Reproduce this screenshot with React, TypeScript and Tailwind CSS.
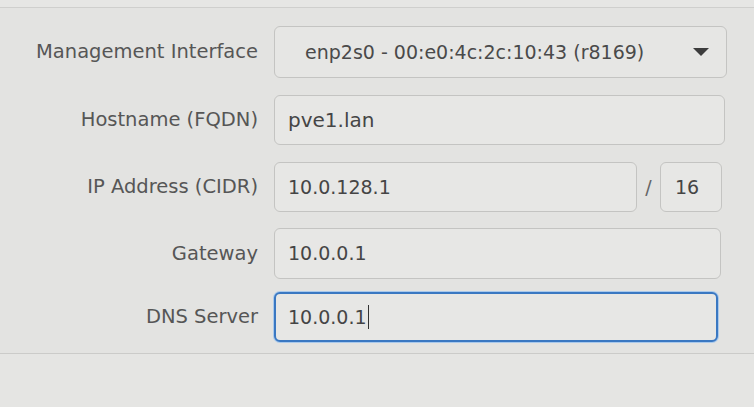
import type { ReactNode } from 'react'

const font = { fontFamily: '"DejaVu Sans", "Noto Sans", sans-serif' }

function Row({ label, className, children }: { label: string; className?: string; children: ReactNode }) {
  return (
    <div className={`flex items-center ${className ?? ''}`}>
      <div className="w-[258px] shrink-0 text-right text-[19.5px] text-[#565656]">{label}</div>
      <div className="ml-4 flex items-center">{children}</div>
    </div>
  )
}

export default function App() {
  return (
    <div className="h-[407px] w-[754px] overflow-hidden bg-[#e3e3e1]" style={font}>
      {/* верхняя граница панели */}
      <div className="h-[7px] bg-[#e6e6e4]" />
      <div className="h-px bg-[#cfcfcd]" />

      <div className="flex flex-col pt-[18px]">
        <Row label="Management Interface">
          <div className="flex h-[52px] w-[453px] items-center rounded-md border border-[#c4c4c2] bg-[#e6e6e4] pl-[30px] pr-[16px] text-[19px] text-[#4a4a4a]">
            <span className="flex-1">enp2s0 - 00:e0:4c:2c:10:43 (r8169)</span>
            <svg width="16" height="8" viewBox="0 0 16 8" className="mr-[1px]">
              <path d="M0 0 L16 0 L8 8 Z" fill="#3c3c3c" />
            </svg>
          </div>
        </Row>

        <Row label="Hostname (FQDN)" className="mt-[17px]">
          <div className="flex h-[50px] w-[451px] items-center rounded-md border border-[#c4c4c2] bg-[#e7e7e5] pl-[13px] text-[20px] text-[#454545]">
            pve1.lan
          </div>
        </Row>

        <Row label="IP Address (CIDR)" className="mt-[17px]">
          <div className="flex h-[50px] w-[363px] items-center rounded-md border border-[#c4c4c2] bg-[#e7e7e5] pl-[13px] text-[19px] text-[#454545]">
            10.0.128.1
          </div>
          <span className="w-[23px] text-center text-[19px] text-[#666]">/</span>
          <div className="flex h-[50px] w-[62px] items-center rounded-md border border-[#c4c4c2] bg-[#e7e7e5] pl-[14px] text-[19px] text-[#454545]">
            16
          </div>
        </Row>

        <Row label="Gateway" className="mt-[16px]">
          <div className="flex h-[51px] w-[447px] items-center rounded-md border border-[#c4c4c2] bg-[#e7e7e5] pl-[13px] text-[19px] text-[#454545]">
            10.0.0.1
          </div>
        </Row>

        <Row label="DNS Server" className="mt-[13px]">
          <div className="flex h-[50px] w-[444px] items-center rounded-md border-2 border-[#3a78c2] bg-[#e7e7e5] pl-[12px] text-[19px] text-[#454545] shadow-[0_0_0_1px_#a9c9ec]">
            10.0.0.1
            <span className="ml-[1px] inline-block h-[24px] w-px bg-[#333]" />
          </div>
        </Row>
      </div>

      <div className="mt-[11px] h-px bg-[#cbcbc9]" />
      <div className="h-full bg-[#e5e5e3]" />
    </div>
  )
}
